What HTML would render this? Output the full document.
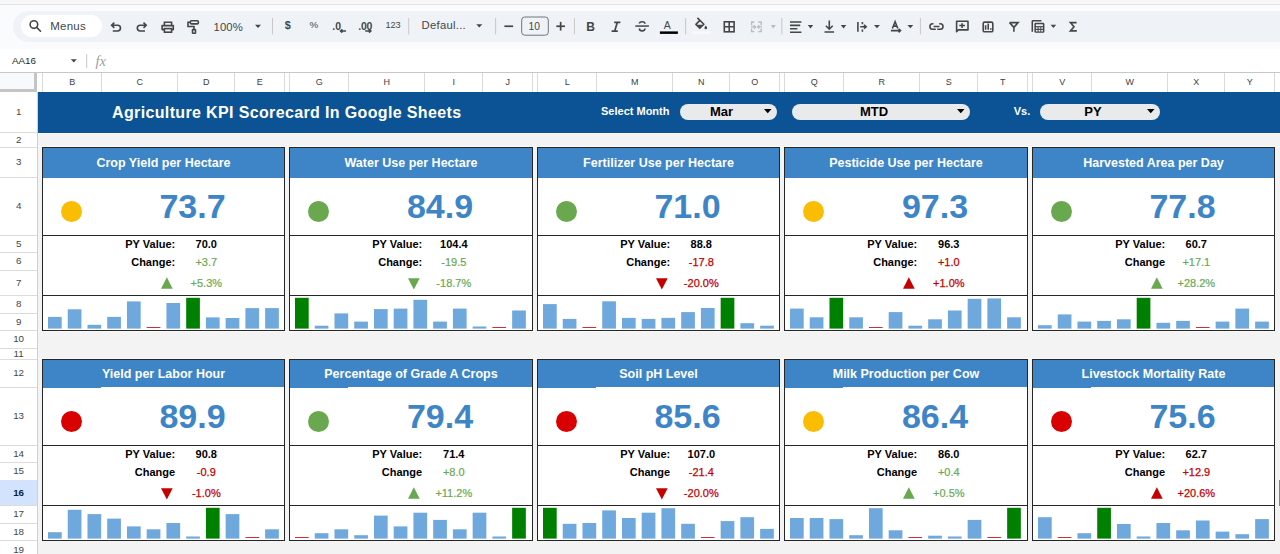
<!DOCTYPE html>
<html><head><meta charset="utf-8"><style>
*{margin:0;padding:0;box-sizing:border-box}
html,body{width:1280px;height:554px;overflow:hidden;background:#f9fbfd;font-family:"Liberation Sans", sans-serif;position:relative}
div,span{position:absolute}
.t{white-space:nowrap;line-height:1}
svg{position:absolute;overflow:visible}
</style></head><body>
<div style="left:0;top:0;width:1280px;height:4px;background:#f7f7f7"></div>
<div style="left:0;top:4px;width:1280px;height:1px;background:#e2e4e6"></div>
<div style="left:12.5px;top:10.6px;width:1300px;height:31.8px;background:#eff3f8;border-radius:16px"></div>
<div style="left:21px;top:14.8px;width:81px;height:22.5px;background:#ffffff;border-radius:11.25px"></div>
<div style="left:0;top:49px;width:1280px;height:23px;background:#ffffff"></div>
<div class="t" style="left:50.2px;top:21.3px;font-size:11.5px;font-weight:normal;color:#444746;letter-spacing:0.25px">Menus</div>
<div class="t" style="left:213.6px;top:22.0px;font-size:11.3px;font-weight:normal;color:#444746;letter-spacing:0.1px">100%</div>
<div class="t" style="left:284.8px;top:19.5px;font-size:10.8px;font-weight:bold;color:#444746;">$</div>
<div class="t" style="left:309.6px;top:20.4px;font-size:9.8px;font-weight:normal;color:#444746;">%</div>
<div class="t" style="left:332.3px;top:21.0px;font-size:10.5px;font-weight:bold;color:#444746;">.0</div>
<div class="t" style="left:358.3px;top:21.0px;font-size:10.5px;font-weight:bold;color:#444746;letter-spacing:-0.3px">.00</div>
<div class="t" style="left:385.4px;top:20.5px;font-size:9.2px;font-weight:normal;color:#444746;">123</div>
<div class="t" style="left:421.6px;top:20.2px;font-size:11.3px;font-weight:normal;color:#444746;letter-spacing:0.25px">Defaul...</div>
<div class="t" style="left:528.4px;top:21.9px;font-size:10.3px;font-weight:normal;color:#444746;letter-spacing:0.2px">10</div>
<div class="t" style="left:586.2px;top:21.4px;font-size:12px;font-weight:bold;color:#444746;">B</div>
<div class="t" style="left:663.8px;top:20.4px;font-size:10.5px;font-weight:normal;color:#444746;">A</div>
<div class="t" style="left:11.9px;top:55.7px;font-size:9.8px;font-weight:normal;color:#444746;color:#1f1f1f">AA16</div>
<svg style="left:0;top:0" width="1280" height="80"><circle cx="33.9" cy="24.6" r="3.8" stroke="#444746" stroke-width="1.6" fill="none"/><path d="M36.7 27.4L40.5 31.2" stroke="#444746" stroke-width="1.6" fill="none" stroke-linecap="round"/><path d="M114.3 22.6L111.6 25.2L114.3 27.8M111.8 25.2H117.6A2.9 2.9 0 0 1 117.6 31H112.8" stroke="#444746" stroke-width="1.6" fill="none"/><path d="M143.5 22.6L146.2 25.2L143.5 27.8M146 25.2H140.2A2.9 2.9 0 0 0 140.2 31H145" stroke="#444746" stroke-width="1.6" fill="none"/><path d="M164.4 25V22.3H171.6V25" stroke="#444746" stroke-width="1.6" fill="none" stroke-width="1.5"/><path d="M164.2 29.6H162.1V25.6H173.3V29.6H171.8" stroke="#444746" stroke-width="1.6" fill="none" stroke-width="1.5" stroke-linejoin="round"/><rect x="164.4" y="28.6" width="7.2" height="3.6" stroke="#444746" stroke-width="1.6" fill="none" stroke-width="1.5"/><rect x="190.3" y="20.8" width="8.1" height="3.1" rx="1.2" stroke="#444746" stroke-width="1.6" fill="none" stroke-width="1.5"/><path d="M190.3 22.3H188V26.5H194V29.3" stroke="#444746" stroke-width="1.6" fill="none" stroke-width="1.5"/><rect x="192.5" y="29.6" width="3" height="3.6" rx="0.5" stroke="#444746" stroke-width="1.6" fill="none" stroke-width="1.5"/><path d="M255 24.8H261L258.0 28.1Z" fill="#444746"/><rect x="272.0" y="18" width="1" height="16.4" fill="#c7c7c7"/><rect x="408.2" y="18" width="1" height="16.4" fill="#c7c7c7"/><rect x="495.1" y="18" width="1" height="16.4" fill="#c7c7c7"/><rect x="573.9" y="18" width="1" height="16.4" fill="#c7c7c7"/><rect x="685.1" y="18" width="1" height="16.4" fill="#c7c7c7"/><rect x="781.3" y="18" width="1" height="16.4" fill="#c7c7c7"/><rect x="919.9" y="18" width="1" height="16.4" fill="#c7c7c7"/><path d="M346 31H340.6M342.4 29.4L340.6 31L342.4 32.6" stroke="#444746" stroke-width="1.6" fill="none" stroke-width="1.3"/><path d="M365.2 31H370.8M369 29.4L370.8 31L369 32.6" stroke="#444746" stroke-width="1.6" fill="none" stroke-width="1.3"/><path d="M476.3 24.2H482.3L479.3 27.5Z" fill="#444746"/><rect x="504.4" y="25.4" width="8.7" height="1.7" fill="#444746"/><rect x="521.7" y="17" width="26.6" height="18.2" rx="3" fill="none" stroke="#747775" stroke-width="1"/><rect x="556.3" y="25.4" width="8.7" height="1.7" fill="#444746"/><rect x="559.8" y="21.9" width="1.7" height="8.7" fill="#444746"/><rect x="635.3" y="25.3" width="13.6" height="1.5" fill="#444746"/><path d="M645 23.8C645 22.3 643.6 21.7 642.2 21.7C640.6 21.7 639.4 22.5 639.4 23.6" stroke="#444746" stroke-width="1.6" fill="none" stroke-width="1.5"/><path d="M639.4 28.4C639.4 30.1 640.7 30.9 642.2 30.9C643.8 30.9 645 30.1 645 28.6" stroke="#444746" stroke-width="1.6" fill="none" stroke-width="1.5"/><rect x="659.9" y="31.4" width="18" height="2.5" fill="#000"/><path d="M697.4 17.9L703.9 24.3L699.8 28.3L695.9 24.4L699.9 20.4" fill="none" stroke="#444746" stroke-width="1.6" stroke-linejoin="round"/><path d="M696.4 24.7H703.4L699.8 28.1Z" fill="#444746"/><path d="M705.8 25.6C706.5 26.5 707.1 27.3 707.1 27.9A1.3 1.3 0 0 1 704.5 27.9C704.5 27.3 705.1 26.5 705.8 25.6Z" fill="#444746"/><rect x="692" y="31.4" width="18.7" height="2.5" fill="#f8f9fb"/><rect x="724.3" y="21.8" width="9.8" height="10" stroke="#444746" stroke-width="1.6" fill="none"/><path d="M729.2 21.8V31.8M724.3 26.8H734.1" stroke="#444746" stroke-width="1.6" fill="none"/><path d="M754.3 22H751.6V25.2M751.6 28.4V31.6H754.3M758.3 22H761.2V25.2M761.2 28.4V31.6H758.3" fill="none" stroke="#b9bbbe" stroke-width="1.4"/><path d="M751 26.9H755.4M753.9 25.3L755.6 26.9L753.9 28.5M762.2 26.9H757.8M759.3 25.3L757.6 26.9L759.3 28.5" fill="none" stroke="#b9bbbe" stroke-width="1.3"/><path d="M770.8 25.1H775.8L773.3 28.400000000000002Z" fill="#b9bbbe"/><path d="M790 22H801.4M790 25.4H800.2M790 28.8H797.4M790 32.2H801.4" stroke="#444746" stroke-width="1.6" fill="none" stroke-width="1.5"/><path d="M807.8 24.9H813.1999999999999L810.5 28.4Z" fill="#444746"/><path d="M829.3 20.6V29M825.9 25.8L829.3 29.2L832.7 25.8M824.5 32H834.1" stroke="#444746" stroke-width="1.6" fill="none"/><path d="M840.8 25H846.3L843.55 28.4Z" fill="#444746"/><path d="M857.9 22.1V31.8" stroke="#444746" stroke-width="1.6" fill="none" stroke-width="1.7"/><path d="M860.2 26.8H865.6M864 24.9L866.2 26.8L864 28.7M862.4 22.1V24.2M862.4 29.4V31.8" stroke="#444746" stroke-width="1.6" fill="none" stroke-width="1.5"/><path d="M874 25.1H879.9L876.95 28.200000000000003Z" fill="#444746"/><path d="M892.4 28.5L895.1 21.7L897.8 28.5M893.3 26.1H896.9" stroke="#444746" stroke-width="1.6" fill="none" stroke-width="1.4"/><path d="M890.9 30.6H900.2M898.6 28.9L900.5 30.6L898.6 32.3" stroke="#444746" stroke-width="1.6" fill="none" stroke-width="1.3"/><path d="M907.4 25.1H913.3L910.35 28.200000000000003Z" fill="#444746"/><path d="M933.5 23.8H932.6A2.7 2.7 0 0 0 932.6 29.2H935.8M939.2 23.8H940.3A2.7 2.7 0 0 1 940.3 29.2H937.2M933.6 26.5H939.4" stroke="#444746" stroke-width="1.6" fill="none" stroke-width="1.7"/><path d="M956.6 31.6V21.3H968V29.9H958.4Z" stroke="#444746" stroke-width="1.6" fill="none" stroke-linejoin="round"/><path d="M962.1 23.2V27.9M959.3 25.5H965" stroke="#444746" stroke-width="1.6" fill="none" stroke-width="1.5"/><rect x="983.2" y="22.1" width="9.6" height="9.7" rx="1.4" stroke="#444746" stroke-width="1.6" fill="none"/><path d="M985.6 25.2V29.7M988.2 23.4V29.7M990.8 28.3V29.7" stroke="#444746" stroke-width="1.6" fill="none" stroke-width="1.3"/><path d="M1009.6 22.6H1018.1L1013.9 27.4V31.7" stroke="#444746" stroke-width="1.6" fill="none" stroke-width="1.7"/><path d="M1009.6 22.6L1013.9 27.4" stroke="#444746" stroke-width="1.6" fill="none" stroke-width="1.7"/><path d="M1032.3 31.8V21.4A0.6 0.6 0 0 1 1032.9 20.8H1041.4" stroke="#444746" stroke-width="1.6" fill="none" stroke-width="1.3"/><rect x="1034.4" y="22.8" width="10" height="10" rx="1.4" fill="#444746"/><rect x="1035.9" y="24.3" width="7" height="1.8" fill="#eff3f8"/><rect x="1035.9" y="27.3" width="1.7" height="1.5" fill="#eff3f8"/><rect x="1035.9" y="30" width="1.7" height="1.5" fill="#eff3f8"/><rect x="1038.6" y="27.3" width="1.7" height="1.5" fill="#eff3f8"/><rect x="1038.6" y="30" width="1.7" height="1.5" fill="#eff3f8"/><rect x="1041.2" y="27.3" width="1.7" height="1.5" fill="#eff3f8"/><rect x="1041.2" y="30" width="1.7" height="1.5" fill="#eff3f8"/><path d="M1050.6 24.7H1056.1999999999998L1053.3999999999999 27.9Z" fill="#444746"/><path d="M1076.6 22.6H1070.4L1074 26.7L1070.4 30.9H1076.8" stroke="#444746" stroke-width="1.6" fill="none" stroke-width="1.6" stroke-linejoin="miter"/><path d="M70.8 59.2H76.8L73.8 62.400000000000006Z" fill="#444746"/><rect x="86.2" y="54" width="1" height="14.2" fill="#c7c7c7"/><path d="M614.2 22.4H620.4M611.6 31.1H617.8M617.3 22.4L614.7 31.1" stroke="#444746" stroke-width="1.7" fill="none"/></svg>
<div class="t" style="left:95.5px;top:54.3px;font-size:14.5px;font-style:italic;font-family:&quot;Liberation Serif&quot;,serif;color:#9e9e9e">fx</div>
<div style="left:0;top:72px;width:1280px;height:1px;background:#c7c7c7"></div>
<div style="left:0;top:73px;width:1280px;height:19px;background:#ffffff"></div>
<div style="left:0;top:73px;width:34px;height:16px;background:#f8f9fa"></div>
<div style="left:34px;top:73px;width:3px;height:19px;background:#c4c4c4"></div>
<div style="left:0;top:89px;width:37px;height:3px;background:#c4c4c4"></div>
<div style="left:42px;top:73px;width:1px;height:19px;background:#d9d9d9"></div>
<div style="left:101px;top:73px;width:1px;height:19px;background:#d9d9d9"></div>
<div style="left:177px;top:73px;width:1px;height:19px;background:#d9d9d9"></div>
<div style="left:234px;top:73px;width:1px;height:19px;background:#d9d9d9"></div>
<div style="left:284px;top:73px;width:1px;height:19px;background:#d9d9d9"></div>
<div style="left:289px;top:73px;width:1px;height:19px;background:#d9d9d9"></div>
<div style="left:348px;top:73px;width:1px;height:19px;background:#d9d9d9"></div>
<div style="left:424px;top:73px;width:1px;height:19px;background:#d9d9d9"></div>
<div style="left:482px;top:73px;width:1px;height:19px;background:#d9d9d9"></div>
<div style="left:532px;top:73px;width:1px;height:19px;background:#d9d9d9"></div>
<div style="left:537px;top:73px;width:1px;height:19px;background:#d9d9d9"></div>
<div style="left:596px;top:73px;width:1px;height:19px;background:#d9d9d9"></div>
<div style="left:672px;top:73px;width:1px;height:19px;background:#d9d9d9"></div>
<div style="left:729px;top:73px;width:1px;height:19px;background:#d9d9d9"></div>
<div style="left:779px;top:73px;width:1px;height:19px;background:#d9d9d9"></div>
<div style="left:784px;top:73px;width:1px;height:19px;background:#d9d9d9"></div>
<div style="left:843px;top:73px;width:1px;height:19px;background:#d9d9d9"></div>
<div style="left:919px;top:73px;width:1px;height:19px;background:#d9d9d9"></div>
<div style="left:977px;top:73px;width:1px;height:19px;background:#d9d9d9"></div>
<div style="left:1027px;top:73px;width:1px;height:19px;background:#d9d9d9"></div>
<div style="left:1032px;top:73px;width:1px;height:19px;background:#d9d9d9"></div>
<div style="left:1091px;top:73px;width:1px;height:19px;background:#d9d9d9"></div>
<div style="left:1167px;top:73px;width:1px;height:19px;background:#d9d9d9"></div>
<div style="left:1224px;top:73px;width:1px;height:19px;background:#d9d9d9"></div>
<div style="left:1274px;top:73px;width:1px;height:19px;background:#d9d9d9"></div>
<div class="t" style="left:52.2px;top:77.8px;width:40px;text-align:center;font-size:9px;color:#3c4043">B</div>
<div class="t" style="left:119.7px;top:77.8px;width:40px;text-align:center;font-size:9px;color:#3c4043">C</div>
<div class="t" style="left:186.2px;top:77.8px;width:40px;text-align:center;font-size:9px;color:#3c4043">D</div>
<div class="t" style="left:239.7px;top:77.8px;width:40px;text-align:center;font-size:9px;color:#3c4043">E</div>
<div class="t" style="left:299.2px;top:77.8px;width:40px;text-align:center;font-size:9px;color:#3c4043">G</div>
<div class="t" style="left:366.7px;top:77.8px;width:40px;text-align:center;font-size:9px;color:#3c4043">H</div>
<div class="t" style="left:433.7px;top:77.8px;width:40px;text-align:center;font-size:9px;color:#3c4043">I</div>
<div class="t" style="left:487.7px;top:77.8px;width:40px;text-align:center;font-size:9px;color:#3c4043">J</div>
<div class="t" style="left:547.2px;top:77.8px;width:40px;text-align:center;font-size:9px;color:#3c4043">L</div>
<div class="t" style="left:614.7px;top:77.8px;width:40px;text-align:center;font-size:9px;color:#3c4043">M</div>
<div class="t" style="left:681.2px;top:77.8px;width:40px;text-align:center;font-size:9px;color:#3c4043">N</div>
<div class="t" style="left:734.7px;top:77.8px;width:40px;text-align:center;font-size:9px;color:#3c4043">O</div>
<div class="t" style="left:794.2px;top:77.8px;width:40px;text-align:center;font-size:9px;color:#3c4043">Q</div>
<div class="t" style="left:861.7px;top:77.8px;width:40px;text-align:center;font-size:9px;color:#3c4043">R</div>
<div class="t" style="left:928.7px;top:77.8px;width:40px;text-align:center;font-size:9px;color:#3c4043">S</div>
<div class="t" style="left:982.7px;top:77.8px;width:40px;text-align:center;font-size:9px;color:#3c4043">T</div>
<div class="t" style="left:1042.2px;top:77.8px;width:40px;text-align:center;font-size:9px;color:#3c4043">V</div>
<div class="t" style="left:1109.7px;top:77.8px;width:40px;text-align:center;font-size:9px;color:#3c4043">W</div>
<div class="t" style="left:1176.2px;top:77.8px;width:40px;text-align:center;font-size:9px;color:#3c4043">X</div>
<div class="t" style="left:1229.7px;top:77.8px;width:40px;text-align:center;font-size:9px;color:#3c4043">Y</div>
<div style="left:37px;top:92px;width:1243px;height:462px;background:#f3f3f3"></div>
<div style="left:0;top:92px;width:37px;height:462px;background:#ffffff"></div>
<div style="left:37px;top:92px;width:1px;height:462px;background:#d0d0d0"></div>
<div style="left:0;top:132px;width:37px;height:1px;background:#dcdcdc"></div>
<div class="t" style="left:0;top:107.4px;width:37px;text-align:center;font-size:9.8px;letter-spacing:-0.2px;font-weight:normal;color:#444746">1</div>
<div style="left:0;top:147px;width:37px;height:1px;background:#dcdcdc"></div>
<div class="t" style="left:0;top:134.9px;width:37px;text-align:center;font-size:9.8px;letter-spacing:-0.2px;font-weight:normal;color:#444746">2</div>
<div style="left:0;top:177px;width:37px;height:1px;background:#dcdcdc"></div>
<div class="t" style="left:0;top:157.4px;width:37px;text-align:center;font-size:9.8px;letter-spacing:-0.2px;font-weight:normal;color:#444746">3</div>
<div style="left:0;top:235px;width:37px;height:1px;background:#dcdcdc"></div>
<div class="t" style="left:0;top:201.4px;width:37px;text-align:center;font-size:9.8px;letter-spacing:-0.2px;font-weight:normal;color:#444746">4</div>
<div style="left:0;top:252px;width:37px;height:1px;background:#dcdcdc"></div>
<div class="t" style="left:0;top:238.9px;width:37px;text-align:center;font-size:9.8px;letter-spacing:-0.2px;font-weight:normal;color:#444746">5</div>
<div style="left:0;top:270px;width:37px;height:1px;background:#dcdcdc"></div>
<div class="t" style="left:0;top:256.4px;width:37px;text-align:center;font-size:9.8px;letter-spacing:-0.2px;font-weight:normal;color:#444746">6</div>
<div style="left:0;top:295px;width:37px;height:1px;background:#dcdcdc"></div>
<div class="t" style="left:0;top:277.9px;width:37px;text-align:center;font-size:9.8px;letter-spacing:-0.2px;font-weight:normal;color:#444746">7</div>
<div style="left:0;top:313px;width:37px;height:1px;background:#dcdcdc"></div>
<div class="t" style="left:0;top:299.4px;width:37px;text-align:center;font-size:9.8px;letter-spacing:-0.2px;font-weight:normal;color:#444746">8</div>
<div style="left:0;top:330px;width:37px;height:1px;background:#dcdcdc"></div>
<div class="t" style="left:0;top:316.9px;width:37px;text-align:center;font-size:9.8px;letter-spacing:-0.2px;font-weight:normal;color:#444746">9</div>
<div style="left:0;top:348px;width:37px;height:1px;background:#dcdcdc"></div>
<div class="t" style="left:0;top:334.4px;width:37px;text-align:center;font-size:9.8px;letter-spacing:-0.2px;font-weight:normal;color:#444746">10</div>
<div style="left:0;top:359px;width:37px;height:1px;background:#dcdcdc"></div>
<div class="t" style="left:0;top:348.9px;width:37px;text-align:center;font-size:9.8px;letter-spacing:-0.2px;font-weight:normal;color:#444746">11</div>
<div style="left:0;top:387px;width:37px;height:1px;background:#dcdcdc"></div>
<div class="t" style="left:0;top:368.4px;width:37px;text-align:center;font-size:9.8px;letter-spacing:-0.2px;font-weight:normal;color:#444746">12</div>
<div style="left:0;top:445px;width:37px;height:1px;background:#dcdcdc"></div>
<div class="t" style="left:0;top:411.4px;width:37px;text-align:center;font-size:9.8px;letter-spacing:-0.2px;font-weight:normal;color:#444746">13</div>
<div style="left:0;top:462px;width:37px;height:1px;background:#dcdcdc"></div>
<div class="t" style="left:0;top:448.9px;width:37px;text-align:center;font-size:9.8px;letter-spacing:-0.2px;font-weight:normal;color:#444746">14</div>
<div style="left:0;top:480px;width:37px;height:1px;background:#dcdcdc"></div>
<div class="t" style="left:0;top:466.4px;width:37px;text-align:center;font-size:9.8px;letter-spacing:-0.2px;font-weight:normal;color:#444746">15</div>
<div style="left:0;top:480px;width:37px;height:25px;background:#d3e3fd"></div>
<div style="left:0;top:505px;width:37px;height:1px;background:#dcdcdc"></div>
<div class="t" style="left:0;top:487.9px;width:37px;text-align:center;font-size:9.8px;letter-spacing:-0.2px;font-weight:bold;color:#0b1f3a">16</div>
<div style="left:0;top:523px;width:37px;height:1px;background:#dcdcdc"></div>
<div class="t" style="left:0;top:509.4px;width:37px;text-align:center;font-size:9.8px;letter-spacing:-0.2px;font-weight:normal;color:#444746">17</div>
<div style="left:0;top:540px;width:37px;height:1px;background:#dcdcdc"></div>
<div class="t" style="left:0;top:526.9px;width:37px;text-align:center;font-size:9.8px;letter-spacing:-0.2px;font-weight:normal;color:#444746">18</div>
<div style="left:0;top:560px;width:37px;height:1px;background:#dcdcdc"></div>
<div class="t" style="left:0;top:545.4px;width:37px;text-align:center;font-size:9.8px;letter-spacing:-0.2px;font-weight:normal;color:#444746">19</div>
<div style="left:38px;top:92px;width:1242px;height:41px;background:#0b5394"></div>
<div style="left:38px;top:133px;width:1242px;height:1px;background:#fbfbfb"></div>
<div style="left:38px;top:146px;width:1242px;height:1px;background:#fbfbfb"></div>
<div style="left:38px;top:331px;width:1242px;height:1px;background:#f8f8f8"></div>
<div style="left:38px;top:358px;width:1242px;height:1px;background:#f8f8f8"></div>
<div class="t" style="left:112px;top:105.3px;font-size:16px;letter-spacing:0.36px;font-weight:bold;color:#ffffff">Agriculture KPI Scorecard In Google Sheets</div>
<div class="t" style="left:601px;top:106px;font-size:11px;font-weight:bold;color:#ffffff">Select Month</div>
<div class="t" style="left:1013.7px;top:106px;font-size:11px;font-weight:bold;color:#ffffff">Vs.</div>
<div style="left:680px;top:104px;width:97px;height:16px;background:#e9eaec;border-radius:8px"></div>
<div class="t" style="left:680px;top:105px;width:83px;text-align:center;font-size:13px;font-weight:bold;color:#000">Mar</div>
<svg style="left:764px;top:109px" width="8" height="5"><path d="M0 0H7.5L3.75 4.2Z" fill="#000"/></svg>
<div style="left:792px;top:104px;width:178px;height:16px;background:#e9eaec;border-radius:8px"></div>
<div class="t" style="left:792px;top:105px;width:164px;text-align:center;font-size:13px;font-weight:bold;color:#000">MTD</div>
<svg style="left:957px;top:109px" width="8" height="5"><path d="M0 0H7.5L3.75 4.2Z" fill="#000"/></svg>
<div style="left:1040px;top:104px;width:120px;height:16px;background:#e9eaec;border-radius:8px"></div>
<div class="t" style="left:1040px;top:105px;width:106px;text-align:center;font-size:13px;font-weight:bold;color:#000">PY</div>
<svg style="left:1147px;top:109px" width="8" height="5"><path d="M0 0H7.5L3.75 4.2Z" fill="#000"/></svg>
<div style="left:42px;top:147px;width:243px;height:184px;background:#ffffff"></div>
<div style="left:42px;top:147px;width:243px;height:31px;background:#3d85c6"></div>
<div style="left:42px;top:147px;width:243px;height:1px;background:#262626"></div>
<div style="left:42px;top:330px;width:243px;height:1px;background:#262626"></div>
<div style="left:42px;top:147px;width:1px;height:184px;background:#262626"></div>
<div style="left:284px;top:147px;width:1px;height:184px;background:#262626"></div>
<div style="left:42px;top:235px;width:243px;height:1px;background:#262626"></div>
<div style="left:42px;top:295px;width:243px;height:1px;background:#262626"></div>
<div class="t" style="left:42.5px;top:156.7px;width:242px;text-align:center;font-size:12.5px;font-weight:bold;color:#fff">Crop Yield per Hectare</div>
<div style="left:61.45px;top:200.5px;width:21px;height:21px;border-radius:50%;background:#fbbc04"></div>
<div class="t" style="left:101px;top:189.0px;width:183px;text-align:center;font-size:34px;font-weight:bold;color:#3d85c6">73.7</div>
<div class="t" style="left:42px;top:239.3px;width:133.2px;text-align:right;font-size:11px;font-weight:bold;color:#000">PY Value:</div>
<div class="t" style="left:177.3px;top:239.3px;width:58px;text-align:center;font-size:11px;font-weight:bold;color:#000">70.0</div>
<div class="t" style="left:42px;top:256.8px;width:133.2px;text-align:right;font-size:11px;font-weight:bold;color:#000">Change:</div>
<div class="t" style="left:177.3px;top:256.8px;width:58px;text-align:center;font-size:11px;font-weight:normal;color:#6aa84f;-webkit-text-stroke:0.2px #6aa84f">+3.7</div>
<div class="t" style="left:177.3px;top:278.3px;width:58px;text-align:center;font-size:11px;font-weight:normal;color:#6aa84f;-webkit-text-stroke:0.2px #6aa84f">+5.3%</div>
<svg style="left:160.60000000000002px;top:276.9px" width="12" height="12"><path d="M5.85 0.3L11.7 11.7H0Z" fill="#6aa84f"/></svg>
<svg style="left:0;top:0" width="1280" height="554"><rect x="48.00" y="316.90" width="13.7" height="11.70" fill="#6fa8dc"/><rect x="67.74" y="309.30" width="13.7" height="19.30" fill="#6fa8dc"/><rect x="87.48" y="324.80" width="13.7" height="3.80" fill="#6fa8dc"/><rect x="107.22" y="316.90" width="13.7" height="11.70" fill="#6fa8dc"/><rect x="126.96" y="301.40" width="13.7" height="27.20" fill="#6fa8dc"/><rect x="146.70" y="327" width="13.7" height="1" fill="#c83232"/><rect x="166.44" y="303.00" width="13.7" height="25.60" fill="#6fa8dc"/><rect x="186.18" y="297.80" width="13.7" height="30.80" fill="#008000"/><rect x="205.92" y="317.40" width="13.7" height="11.20" fill="#6fa8dc"/><rect x="225.66" y="318.00" width="13.7" height="10.60" fill="#6fa8dc"/><rect x="245.40" y="308.10" width="13.7" height="20.50" fill="#6fa8dc"/><rect x="265.14" y="308.10" width="13.7" height="20.50" fill="#6fa8dc"/></svg>
<div style="left:289px;top:147px;width:244px;height:184px;background:#ffffff"></div>
<div style="left:289px;top:147px;width:244px;height:31px;background:#3d85c6"></div>
<div style="left:289px;top:147px;width:244px;height:1px;background:#262626"></div>
<div style="left:289px;top:330px;width:244px;height:1px;background:#262626"></div>
<div style="left:289px;top:147px;width:1px;height:184px;background:#262626"></div>
<div style="left:532px;top:147px;width:1px;height:184px;background:#262626"></div>
<div style="left:289px;top:235px;width:244px;height:1px;background:#262626"></div>
<div style="left:289px;top:295px;width:244px;height:1px;background:#262626"></div>
<div class="t" style="left:289.5px;top:156.7px;width:243px;text-align:center;font-size:12.5px;font-weight:bold;color:#fff">Water Use per Hectare</div>
<div style="left:308.45px;top:200.5px;width:21px;height:21px;border-radius:50%;background:#6aa84f"></div>
<div class="t" style="left:348px;top:189.0px;width:184px;text-align:center;font-size:34px;font-weight:bold;color:#3d85c6">84.9</div>
<div class="t" style="left:289px;top:239.3px;width:133.2px;text-align:right;font-size:11px;font-weight:bold;color:#000">PY Value:</div>
<div class="t" style="left:424.3px;top:239.3px;width:59px;text-align:center;font-size:11px;font-weight:bold;color:#000">104.4</div>
<div class="t" style="left:289px;top:256.8px;width:133.2px;text-align:right;font-size:11px;font-weight:bold;color:#000">Change:</div>
<div class="t" style="left:424.3px;top:256.8px;width:59px;text-align:center;font-size:11px;font-weight:normal;color:#6aa84f;-webkit-text-stroke:0.2px #6aa84f">-19.5</div>
<div class="t" style="left:424.3px;top:278.3px;width:59px;text-align:center;font-size:11px;font-weight:normal;color:#6aa84f;-webkit-text-stroke:0.2px #6aa84f">-18.7%</div>
<svg style="left:407.6px;top:277.5px" width="12" height="12"><path d="M0 0.2H11.7L5.85 11.4Z" fill="#6aa84f"/></svg>
<svg style="left:0;top:0" width="1280" height="554"><rect x="295.00" y="297.80" width="13.7" height="30.80" fill="#008000"/><rect x="314.74" y="325.70" width="13.7" height="2.90" fill="#6fa8dc"/><rect x="334.48" y="313.40" width="13.7" height="15.20" fill="#6fa8dc"/><rect x="354.22" y="321.60" width="13.7" height="7.00" fill="#6fa8dc"/><rect x="373.96" y="309.10" width="13.7" height="19.50" fill="#6fa8dc"/><rect x="393.70" y="308.60" width="13.7" height="20.00" fill="#6fa8dc"/><rect x="413.44" y="299.80" width="13.7" height="28.80" fill="#6fa8dc"/><rect x="433.18" y="321.60" width="13.7" height="7.00" fill="#6fa8dc"/><rect x="452.92" y="308.60" width="13.7" height="20.00" fill="#6fa8dc"/><rect x="472.66" y="326.50" width="13.7" height="2.10" fill="#6fa8dc"/><rect x="492.40" y="327" width="13.7" height="1" fill="#c83232"/><rect x="512.14" y="310.50" width="13.7" height="18.10" fill="#6fa8dc"/></svg>
<div style="left:537px;top:147px;width:243px;height:184px;background:#ffffff"></div>
<div style="left:537px;top:147px;width:243px;height:31px;background:#3d85c6"></div>
<div style="left:537px;top:147px;width:243px;height:1px;background:#262626"></div>
<div style="left:537px;top:330px;width:243px;height:1px;background:#262626"></div>
<div style="left:537px;top:147px;width:1px;height:184px;background:#262626"></div>
<div style="left:779px;top:147px;width:1px;height:184px;background:#262626"></div>
<div style="left:537px;top:235px;width:243px;height:1px;background:#262626"></div>
<div style="left:537px;top:295px;width:243px;height:1px;background:#262626"></div>
<div class="t" style="left:537.5px;top:156.7px;width:242px;text-align:center;font-size:12.5px;font-weight:bold;color:#fff">Fertilizer Use per Hectare</div>
<div style="left:556.45px;top:200.5px;width:21px;height:21px;border-radius:50%;background:#6aa84f"></div>
<div class="t" style="left:596px;top:189.0px;width:183px;text-align:center;font-size:34px;font-weight:bold;color:#3d85c6">71.0</div>
<div class="t" style="left:537px;top:239.3px;width:133.2px;text-align:right;font-size:11px;font-weight:bold;color:#000">PY Value:</div>
<div class="t" style="left:672.3px;top:239.3px;width:58px;text-align:center;font-size:11px;font-weight:bold;color:#000">88.8</div>
<div class="t" style="left:537px;top:256.8px;width:133.2px;text-align:right;font-size:11px;font-weight:bold;color:#000">Change:</div>
<div class="t" style="left:672.3px;top:256.8px;width:58px;text-align:center;font-size:11px;font-weight:normal;color:#c40000;-webkit-text-stroke:0.25px #c40000">-17.8</div>
<div class="t" style="left:672.3px;top:278.3px;width:58px;text-align:center;font-size:11px;font-weight:normal;color:#c40000;-webkit-text-stroke:0.25px #c40000">-20.0%</div>
<svg style="left:655.5999999999999px;top:277.5px" width="12" height="12"><path d="M0 0.2H11.7L5.85 11.4Z" fill="#c40000"/></svg>
<svg style="left:0;top:0" width="1280" height="554"><rect x="543.00" y="304.10" width="13.7" height="24.50" fill="#6fa8dc"/><rect x="562.74" y="318.90" width="13.7" height="9.70" fill="#6fa8dc"/><rect x="582.48" y="327" width="13.7" height="1" fill="#c83232"/><rect x="602.22" y="301.30" width="13.7" height="27.30" fill="#6fa8dc"/><rect x="621.96" y="317.90" width="13.7" height="10.70" fill="#6fa8dc"/><rect x="641.70" y="318.90" width="13.7" height="9.70" fill="#6fa8dc"/><rect x="661.44" y="317.90" width="13.7" height="10.70" fill="#6fa8dc"/><rect x="681.18" y="312.10" width="13.7" height="16.50" fill="#6fa8dc"/><rect x="700.92" y="308.00" width="13.7" height="20.60" fill="#6fa8dc"/><rect x="720.66" y="297.80" width="13.7" height="30.80" fill="#008000"/><rect x="740.40" y="323.20" width="13.7" height="5.40" fill="#6fa8dc"/><rect x="760.14" y="325.70" width="13.7" height="2.90" fill="#6fa8dc"/></svg>
<div style="left:784px;top:147px;width:244px;height:184px;background:#ffffff"></div>
<div style="left:784px;top:147px;width:244px;height:31px;background:#3d85c6"></div>
<div style="left:784px;top:147px;width:244px;height:1px;background:#262626"></div>
<div style="left:784px;top:330px;width:244px;height:1px;background:#262626"></div>
<div style="left:784px;top:147px;width:1px;height:184px;background:#262626"></div>
<div style="left:1027px;top:147px;width:1px;height:184px;background:#262626"></div>
<div style="left:784px;top:235px;width:244px;height:1px;background:#262626"></div>
<div style="left:784px;top:295px;width:244px;height:1px;background:#262626"></div>
<div class="t" style="left:784.5px;top:156.7px;width:243px;text-align:center;font-size:12.5px;font-weight:bold;color:#fff">Pesticide Use per Hectare</div>
<div style="left:803.45px;top:200.5px;width:21px;height:21px;border-radius:50%;background:#fbbc04"></div>
<div class="t" style="left:843px;top:189.0px;width:184px;text-align:center;font-size:34px;font-weight:bold;color:#3d85c6">97.3</div>
<div class="t" style="left:784px;top:239.3px;width:133.2px;text-align:right;font-size:11px;font-weight:bold;color:#000">PY Value:</div>
<div class="t" style="left:919.3px;top:239.3px;width:59px;text-align:center;font-size:11px;font-weight:bold;color:#000">96.3</div>
<div class="t" style="left:784px;top:256.8px;width:133.2px;text-align:right;font-size:11px;font-weight:bold;color:#000">Change:</div>
<div class="t" style="left:919.3px;top:256.8px;width:59px;text-align:center;font-size:11px;font-weight:normal;color:#c40000;-webkit-text-stroke:0.25px #c40000">+1.0</div>
<div class="t" style="left:919.3px;top:278.3px;width:59px;text-align:center;font-size:11px;font-weight:normal;color:#c40000;-webkit-text-stroke:0.25px #c40000">+1.0%</div>
<svg style="left:902.5999999999999px;top:276.9px" width="12" height="12"><path d="M5.85 0.3L11.7 11.7H0Z" fill="#c40000"/></svg>
<svg style="left:0;top:0" width="1280" height="554"><rect x="790.00" y="308.60" width="13.7" height="20.00" fill="#6fa8dc"/><rect x="809.74" y="317.30" width="13.7" height="11.30" fill="#6fa8dc"/><rect x="829.48" y="297.80" width="13.7" height="30.80" fill="#008000"/><rect x="849.22" y="317.30" width="13.7" height="11.30" fill="#6fa8dc"/><rect x="868.96" y="327" width="13.7" height="1" fill="#c83232"/><rect x="888.70" y="312.10" width="13.7" height="16.50" fill="#6fa8dc"/><rect x="908.44" y="325.70" width="13.7" height="2.90" fill="#6fa8dc"/><rect x="928.18" y="319.30" width="13.7" height="9.30" fill="#6fa8dc"/><rect x="947.92" y="310.50" width="13.7" height="18.10" fill="#6fa8dc"/><rect x="967.66" y="298.80" width="13.7" height="29.80" fill="#6fa8dc"/><rect x="987.40" y="298.40" width="13.7" height="30.20" fill="#6fa8dc"/><rect x="1007.14" y="317.30" width="13.7" height="11.30" fill="#6fa8dc"/></svg>
<div style="left:1032px;top:147px;width:243px;height:184px;background:#ffffff"></div>
<div style="left:1032px;top:147px;width:243px;height:31px;background:#3d85c6"></div>
<div style="left:1032px;top:147px;width:243px;height:1px;background:#262626"></div>
<div style="left:1032px;top:330px;width:243px;height:1px;background:#262626"></div>
<div style="left:1032px;top:147px;width:1px;height:184px;background:#262626"></div>
<div style="left:1274px;top:147px;width:1px;height:184px;background:#262626"></div>
<div style="left:1032px;top:235px;width:243px;height:1px;background:#262626"></div>
<div style="left:1032px;top:295px;width:243px;height:1px;background:#262626"></div>
<div class="t" style="left:1032.5px;top:156.7px;width:242px;text-align:center;font-size:12.5px;font-weight:bold;color:#fff">Harvested Area per Day</div>
<div style="left:1051.45px;top:200.5px;width:21px;height:21px;border-radius:50%;background:#6aa84f"></div>
<div class="t" style="left:1091px;top:189.0px;width:183px;text-align:center;font-size:34px;font-weight:bold;color:#3d85c6">77.8</div>
<div class="t" style="left:1032px;top:239.3px;width:133.2px;text-align:right;font-size:11px;font-weight:bold;color:#000">PY Value:</div>
<div class="t" style="left:1167.3px;top:239.3px;width:58px;text-align:center;font-size:11px;font-weight:bold;color:#000">60.7</div>
<div class="t" style="left:1032px;top:256.8px;width:133.2px;text-align:right;font-size:11px;font-weight:bold;color:#000">Change</div>
<div class="t" style="left:1167.3px;top:256.8px;width:58px;text-align:center;font-size:11px;font-weight:normal;color:#6aa84f;-webkit-text-stroke:0.2px #6aa84f">+17.1</div>
<div class="t" style="left:1167.3px;top:278.3px;width:58px;text-align:center;font-size:11px;font-weight:normal;color:#6aa84f;-webkit-text-stroke:0.2px #6aa84f">+28.2%</div>
<svg style="left:1150.6px;top:276.9px" width="12" height="12"><path d="M5.85 0.3L11.7 11.7H0Z" fill="#6aa84f"/></svg>
<svg style="left:0;top:0" width="1280" height="554"><rect x="1038.00" y="325.20" width="13.7" height="3.40" fill="#6fa8dc"/><rect x="1057.74" y="314.40" width="13.7" height="14.20" fill="#6fa8dc"/><rect x="1077.48" y="321.60" width="13.7" height="7.00" fill="#6fa8dc"/><rect x="1097.22" y="320.90" width="13.7" height="7.70" fill="#6fa8dc"/><rect x="1116.96" y="319.30" width="13.7" height="9.30" fill="#6fa8dc"/><rect x="1136.70" y="297.80" width="13.7" height="30.80" fill="#008000"/><rect x="1156.44" y="322.80" width="13.7" height="5.80" fill="#6fa8dc"/><rect x="1176.18" y="320.90" width="13.7" height="7.70" fill="#6fa8dc"/><rect x="1195.92" y="327" width="13.7" height="1" fill="#c83232"/><rect x="1215.66" y="321.60" width="13.7" height="7.00" fill="#6fa8dc"/><rect x="1235.40" y="308.60" width="13.7" height="20.00" fill="#6fa8dc"/><rect x="1255.14" y="321.60" width="13.7" height="7.00" fill="#6fa8dc"/></svg>
<div style="left:42px;top:359px;width:243px;height:182px;background:#ffffff"></div>
<div style="left:42px;top:359px;width:243px;height:28px;background:#3d85c6"></div>
<div style="left:42px;top:387px;width:59px;height:1px;background:#3d85c6"></div>
<div style="left:42px;top:359px;width:243px;height:1px;background:#262626"></div>
<div style="left:42px;top:540px;width:243px;height:1px;background:#262626"></div>
<div style="left:42px;top:359px;width:1px;height:182px;background:#262626"></div>
<div style="left:284px;top:359px;width:1px;height:182px;background:#262626"></div>
<div style="left:42px;top:445px;width:243px;height:1px;background:#262626"></div>
<div style="left:42px;top:505px;width:243px;height:1px;background:#262626"></div>
<div class="t" style="left:42.5px;top:367.7px;width:242px;text-align:center;font-size:12.5px;font-weight:bold;color:#fff">Yield per Labor Hour</div>
<div style="left:61.45px;top:410.5px;width:21px;height:21px;border-radius:50%;background:#d80000"></div>
<div class="t" style="left:101px;top:399.0px;width:183px;text-align:center;font-size:34px;font-weight:bold;color:#3d85c6">89.9</div>
<div class="t" style="left:42px;top:449.3px;width:133.2px;text-align:right;font-size:11px;font-weight:bold;color:#000">PY Value:</div>
<div class="t" style="left:177.3px;top:449.3px;width:58px;text-align:center;font-size:11px;font-weight:bold;color:#000">90.8</div>
<div class="t" style="left:42px;top:466.8px;width:133.2px;text-align:right;font-size:11px;font-weight:bold;color:#000">Change</div>
<div class="t" style="left:177.3px;top:466.8px;width:58px;text-align:center;font-size:11px;font-weight:normal;color:#c40000;-webkit-text-stroke:0.25px #c40000">-0.9</div>
<div class="t" style="left:177.3px;top:488.3px;width:58px;text-align:center;font-size:11px;font-weight:normal;color:#c40000;-webkit-text-stroke:0.25px #c40000">-1.0%</div>
<svg style="left:160.60000000000002px;top:487.5px" width="12" height="12"><path d="M0 0.2H11.7L5.85 11.4Z" fill="#c40000"/></svg>
<svg style="left:0;top:0" width="1280" height="554"><rect x="48.00" y="532.20" width="13.7" height="6.40" fill="#6fa8dc"/><rect x="67.74" y="509.80" width="13.7" height="28.80" fill="#6fa8dc"/><rect x="87.48" y="514.10" width="13.7" height="24.50" fill="#6fa8dc"/><rect x="107.22" y="518.60" width="13.7" height="20.00" fill="#6fa8dc"/><rect x="126.96" y="526.40" width="13.7" height="12.20" fill="#6fa8dc"/><rect x="146.70" y="529.30" width="13.7" height="9.30" fill="#6fa8dc"/><rect x="166.44" y="523.00" width="13.7" height="15.60" fill="#6fa8dc"/><rect x="186.18" y="536.50" width="13.7" height="2.10" fill="#6fa8dc"/><rect x="205.92" y="507.80" width="13.7" height="30.80" fill="#008000"/><rect x="225.66" y="514.10" width="13.7" height="24.50" fill="#6fa8dc"/><rect x="245.40" y="537" width="13.7" height="1" fill="#c83232"/><rect x="265.14" y="529.30" width="13.7" height="9.30" fill="#6fa8dc"/></svg>
<div style="left:289px;top:359px;width:244px;height:182px;background:#ffffff"></div>
<div style="left:289px;top:359px;width:244px;height:28px;background:#3d85c6"></div>
<div style="left:289px;top:387px;width:59px;height:1px;background:#3d85c6"></div>
<div style="left:289px;top:359px;width:244px;height:1px;background:#262626"></div>
<div style="left:289px;top:540px;width:244px;height:1px;background:#262626"></div>
<div style="left:289px;top:359px;width:1px;height:182px;background:#262626"></div>
<div style="left:532px;top:359px;width:1px;height:182px;background:#262626"></div>
<div style="left:289px;top:445px;width:244px;height:1px;background:#262626"></div>
<div style="left:289px;top:505px;width:244px;height:1px;background:#262626"></div>
<div class="t" style="left:289.5px;top:367.7px;width:243px;text-align:center;font-size:12.5px;font-weight:bold;color:#fff">Percentage of Grade A Crops</div>
<div style="left:308.45px;top:410.5px;width:21px;height:21px;border-radius:50%;background:#6aa84f"></div>
<div class="t" style="left:348px;top:399.0px;width:184px;text-align:center;font-size:34px;font-weight:bold;color:#3d85c6">79.4</div>
<div class="t" style="left:289px;top:449.3px;width:133.2px;text-align:right;font-size:11px;font-weight:bold;color:#000">PY Value:</div>
<div class="t" style="left:424.3px;top:449.3px;width:59px;text-align:center;font-size:11px;font-weight:bold;color:#000">71.4</div>
<div class="t" style="left:289px;top:466.8px;width:133.2px;text-align:right;font-size:11px;font-weight:bold;color:#000">Change</div>
<div class="t" style="left:424.3px;top:466.8px;width:59px;text-align:center;font-size:11px;font-weight:normal;color:#6aa84f;-webkit-text-stroke:0.2px #6aa84f">+8.0</div>
<div class="t" style="left:424.3px;top:488.3px;width:59px;text-align:center;font-size:11px;font-weight:normal;color:#6aa84f;-webkit-text-stroke:0.2px #6aa84f">+11.2%</div>
<svg style="left:407.6px;top:486.9px" width="12" height="12"><path d="M5.85 0.3L11.7 11.7H0Z" fill="#6aa84f"/></svg>
<svg style="left:0;top:0" width="1280" height="554"><rect x="295.00" y="537" width="13.7" height="1" fill="#c83232"/><rect x="314.74" y="533.20" width="13.7" height="5.40" fill="#6fa8dc"/><rect x="334.48" y="529.30" width="13.7" height="9.30" fill="#6fa8dc"/><rect x="354.22" y="535.20" width="13.7" height="3.40" fill="#6fa8dc"/><rect x="373.96" y="515.60" width="13.7" height="23.00" fill="#6fa8dc"/><rect x="393.70" y="526.40" width="13.7" height="12.20" fill="#6fa8dc"/><rect x="413.44" y="512.70" width="13.7" height="25.90" fill="#6fa8dc"/><rect x="433.18" y="519.90" width="13.7" height="18.70" fill="#6fa8dc"/><rect x="452.92" y="529.30" width="13.7" height="9.30" fill="#6fa8dc"/><rect x="472.66" y="512.70" width="13.7" height="25.90" fill="#6fa8dc"/><rect x="492.40" y="536.50" width="13.7" height="2.10" fill="#6fa8dc"/><rect x="512.14" y="507.80" width="13.7" height="30.80" fill="#008000"/></svg>
<div style="left:537px;top:359px;width:243px;height:182px;background:#ffffff"></div>
<div style="left:537px;top:359px;width:243px;height:28px;background:#3d85c6"></div>
<div style="left:537px;top:387px;width:59px;height:1px;background:#3d85c6"></div>
<div style="left:537px;top:359px;width:243px;height:1px;background:#262626"></div>
<div style="left:537px;top:540px;width:243px;height:1px;background:#262626"></div>
<div style="left:537px;top:359px;width:1px;height:182px;background:#262626"></div>
<div style="left:779px;top:359px;width:1px;height:182px;background:#262626"></div>
<div style="left:537px;top:445px;width:243px;height:1px;background:#262626"></div>
<div style="left:537px;top:505px;width:243px;height:1px;background:#262626"></div>
<div class="t" style="left:537.5px;top:367.7px;width:242px;text-align:center;font-size:12.5px;font-weight:bold;color:#fff">Soil pH Level</div>
<div style="left:556.45px;top:410.5px;width:21px;height:21px;border-radius:50%;background:#d80000"></div>
<div class="t" style="left:596px;top:399.0px;width:183px;text-align:center;font-size:34px;font-weight:bold;color:#3d85c6">85.6</div>
<div class="t" style="left:537px;top:449.3px;width:133.2px;text-align:right;font-size:11px;font-weight:bold;color:#000">PY Value:</div>
<div class="t" style="left:672.3px;top:449.3px;width:58px;text-align:center;font-size:11px;font-weight:bold;color:#000">107.0</div>
<div class="t" style="left:537px;top:466.8px;width:133.2px;text-align:right;font-size:11px;font-weight:bold;color:#000">Change</div>
<div class="t" style="left:672.3px;top:466.8px;width:58px;text-align:center;font-size:11px;font-weight:normal;color:#c40000;-webkit-text-stroke:0.25px #c40000">-21.4</div>
<div class="t" style="left:672.3px;top:488.3px;width:58px;text-align:center;font-size:11px;font-weight:normal;color:#c40000;-webkit-text-stroke:0.25px #c40000">-20.0%</div>
<svg style="left:655.5999999999999px;top:487.5px" width="12" height="12"><path d="M0 0.2H11.7L5.85 11.4Z" fill="#c40000"/></svg>
<svg style="left:0;top:0" width="1280" height="554"><rect x="543.00" y="507.80" width="13.7" height="30.80" fill="#008000"/><rect x="562.74" y="523.80" width="13.7" height="14.80" fill="#6fa8dc"/><rect x="582.48" y="523.00" width="13.7" height="15.60" fill="#6fa8dc"/><rect x="602.22" y="510.40" width="13.7" height="28.20" fill="#6fa8dc"/><rect x="621.96" y="518.00" width="13.7" height="20.60" fill="#6fa8dc"/><rect x="641.70" y="512.70" width="13.7" height="25.90" fill="#6fa8dc"/><rect x="661.44" y="508.20" width="13.7" height="30.40" fill="#6fa8dc"/><rect x="681.18" y="523.80" width="13.7" height="14.80" fill="#6fa8dc"/><rect x="700.92" y="537" width="13.7" height="1" fill="#c83232"/><rect x="720.66" y="521.10" width="13.7" height="17.50" fill="#6fa8dc"/><rect x="740.40" y="517.20" width="13.7" height="21.40" fill="#6fa8dc"/><rect x="760.14" y="528.90" width="13.7" height="9.70" fill="#6fa8dc"/></svg>
<div style="left:784px;top:359px;width:244px;height:182px;background:#ffffff"></div>
<div style="left:784px;top:359px;width:244px;height:28px;background:#3d85c6"></div>
<div style="left:784px;top:387px;width:59px;height:1px;background:#3d85c6"></div>
<div style="left:784px;top:359px;width:244px;height:1px;background:#262626"></div>
<div style="left:784px;top:540px;width:244px;height:1px;background:#262626"></div>
<div style="left:784px;top:359px;width:1px;height:182px;background:#262626"></div>
<div style="left:1027px;top:359px;width:1px;height:182px;background:#262626"></div>
<div style="left:784px;top:445px;width:244px;height:1px;background:#262626"></div>
<div style="left:784px;top:505px;width:244px;height:1px;background:#262626"></div>
<div class="t" style="left:784.5px;top:367.7px;width:243px;text-align:center;font-size:12.5px;font-weight:bold;color:#fff">Milk Production per Cow</div>
<div style="left:803.45px;top:410.5px;width:21px;height:21px;border-radius:50%;background:#fbbc04"></div>
<div class="t" style="left:843px;top:399.0px;width:184px;text-align:center;font-size:34px;font-weight:bold;color:#3d85c6">86.4</div>
<div class="t" style="left:784px;top:449.3px;width:133.2px;text-align:right;font-size:11px;font-weight:bold;color:#000">PY Value:</div>
<div class="t" style="left:919.3px;top:449.3px;width:59px;text-align:center;font-size:11px;font-weight:bold;color:#000">86.0</div>
<div class="t" style="left:784px;top:466.8px;width:133.2px;text-align:right;font-size:11px;font-weight:bold;color:#000">Change</div>
<div class="t" style="left:919.3px;top:466.8px;width:59px;text-align:center;font-size:11px;font-weight:normal;color:#6aa84f;-webkit-text-stroke:0.2px #6aa84f">+0.4</div>
<div class="t" style="left:919.3px;top:488.3px;width:59px;text-align:center;font-size:11px;font-weight:normal;color:#6aa84f;-webkit-text-stroke:0.2px #6aa84f">+0.5%</div>
<svg style="left:902.5999999999999px;top:486.9px" width="12" height="12"><path d="M5.85 0.3L11.7 11.7H0Z" fill="#6aa84f"/></svg>
<svg style="left:0;top:0" width="1280" height="554"><rect x="790.00" y="518.00" width="13.7" height="20.60" fill="#6fa8dc"/><rect x="809.74" y="518.00" width="13.7" height="20.60" fill="#6fa8dc"/><rect x="829.48" y="519.10" width="13.7" height="19.50" fill="#6fa8dc"/><rect x="849.22" y="535.20" width="13.7" height="3.40" fill="#6fa8dc"/><rect x="868.96" y="508.20" width="13.7" height="30.40" fill="#6fa8dc"/><rect x="888.70" y="530.30" width="13.7" height="8.30" fill="#6fa8dc"/><rect x="908.44" y="537" width="13.7" height="1" fill="#c83232"/><rect x="928.18" y="535.70" width="13.7" height="2.90" fill="#6fa8dc"/><rect x="947.92" y="536.50" width="13.7" height="2.10" fill="#6fa8dc"/><rect x="967.66" y="519.90" width="13.7" height="18.70" fill="#6fa8dc"/><rect x="987.40" y="537" width="13.7" height="1" fill="#c83232"/><rect x="1007.14" y="507.80" width="13.7" height="30.80" fill="#008000"/></svg>
<div style="left:1032px;top:359px;width:243px;height:182px;background:#ffffff"></div>
<div style="left:1032px;top:359px;width:243px;height:28px;background:#3d85c6"></div>
<div style="left:1032px;top:387px;width:59px;height:1px;background:#3d85c6"></div>
<div style="left:1032px;top:359px;width:243px;height:1px;background:#262626"></div>
<div style="left:1032px;top:540px;width:243px;height:1px;background:#262626"></div>
<div style="left:1032px;top:359px;width:1px;height:182px;background:#262626"></div>
<div style="left:1274px;top:359px;width:1px;height:182px;background:#262626"></div>
<div style="left:1032px;top:445px;width:243px;height:1px;background:#262626"></div>
<div style="left:1032px;top:505px;width:243px;height:1px;background:#262626"></div>
<div class="t" style="left:1032.5px;top:367.7px;width:242px;text-align:center;font-size:12.5px;font-weight:bold;color:#fff">Livestock Mortality Rate</div>
<div style="left:1051.45px;top:410.5px;width:21px;height:21px;border-radius:50%;background:#d80000"></div>
<div class="t" style="left:1091px;top:399.0px;width:183px;text-align:center;font-size:34px;font-weight:bold;color:#3d85c6">75.6</div>
<div class="t" style="left:1032px;top:449.3px;width:133.2px;text-align:right;font-size:11px;font-weight:bold;color:#000">PY Value:</div>
<div class="t" style="left:1167.3px;top:449.3px;width:58px;text-align:center;font-size:11px;font-weight:bold;color:#000">62.7</div>
<div class="t" style="left:1032px;top:466.8px;width:133.2px;text-align:right;font-size:11px;font-weight:bold;color:#000">Change</div>
<div class="t" style="left:1167.3px;top:466.8px;width:58px;text-align:center;font-size:11px;font-weight:normal;color:#c40000;-webkit-text-stroke:0.25px #c40000">+12.9</div>
<div class="t" style="left:1167.3px;top:488.3px;width:58px;text-align:center;font-size:11px;font-weight:normal;color:#c40000;-webkit-text-stroke:0.25px #c40000">+20.6%</div>
<svg style="left:1150.6px;top:486.9px" width="12" height="12"><path d="M5.85 0.3L11.7 11.7H0Z" fill="#c40000"/></svg>
<svg style="left:0;top:0" width="1280" height="554"><rect x="1038.00" y="517.20" width="13.7" height="21.40" fill="#6fa8dc"/><rect x="1057.74" y="537" width="13.7" height="1" fill="#c83232"/><rect x="1077.48" y="533.20" width="13.7" height="5.40" fill="#6fa8dc"/><rect x="1097.22" y="507.80" width="13.7" height="30.80" fill="#008000"/><rect x="1116.96" y="524.00" width="13.7" height="14.60" fill="#6fa8dc"/><rect x="1136.70" y="536.50" width="13.7" height="2.10" fill="#6fa8dc"/><rect x="1156.44" y="523.00" width="13.7" height="15.60" fill="#6fa8dc"/><rect x="1176.18" y="530.30" width="13.7" height="8.30" fill="#6fa8dc"/><rect x="1195.92" y="520.50" width="13.7" height="18.10" fill="#6fa8dc"/><rect x="1215.66" y="531.60" width="13.7" height="7.00" fill="#6fa8dc"/><rect x="1235.40" y="534.20" width="13.7" height="4.40" fill="#6fa8dc"/><rect x="1255.14" y="519.10" width="13.7" height="19.50" fill="#6fa8dc"/></svg>
<div style="left:1279px;top:480px;width:1px;height:26px;background:#5b86cc"></div>
</body></html>
